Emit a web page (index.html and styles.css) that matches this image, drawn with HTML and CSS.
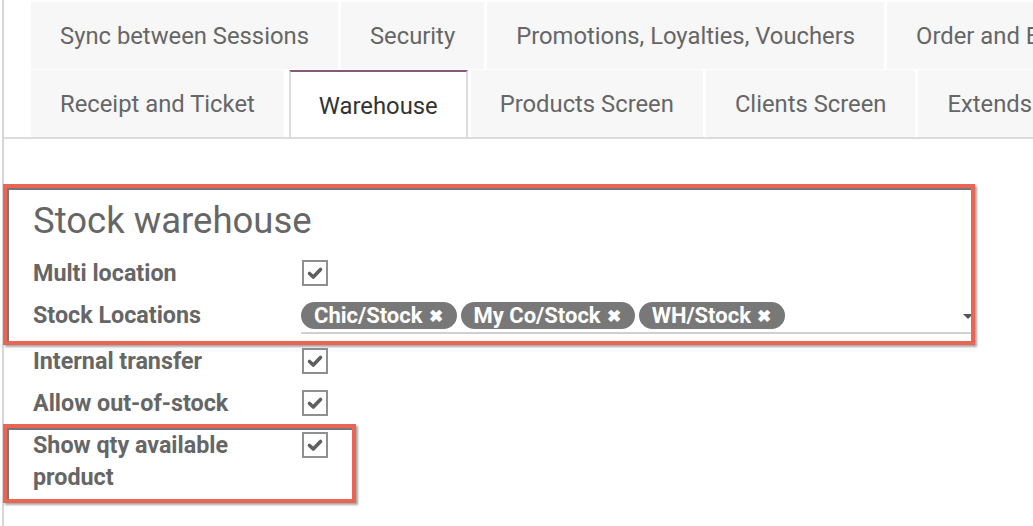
FILE: index.html
```html
<!DOCTYPE html>
<html>
<head>
<meta charset="utf-8">
<link rel="stylesheet" href="styles.css">
</head>
<body>
<div class="sheet">
  <div class="tabs">
    <div class="tab-row">
      <div class="tab">Sync between Sessions</div>
      <div class="tab">Security</div>
      <div class="tab">Promotions, Loyalties, Vouchers</div>
      <div class="tab">Order and Booking</div>
    </div>
    <div class="tab-row">
      <div class="tab">Receipt and Ticket</div>
      <div class="tab active">Warehouse</div>
      <div class="tab">Products Screen</div>
      <div class="tab">Clients Screen</div>
      <div class="tab">Extends</div>
    </div>
  </div>

  <div class="form">
    <h2 class="group-title">Stock warehouse</h2>
    <div class="row">
      <div class="label">Multi location</div>
      <div class="field"><span class="check"><svg viewBox="0 0 20 20" width="20" height="20"><path d="M4.5 10.5 L8.3 14 L15.5 6.5" fill="none" stroke="#5f5f5f" stroke-width="3.6" stroke-linecap="round" stroke-linejoin="round"/></svg></span></div>
    </div>
    <div class="row row-tags">
      <div class="label">Stock Locations</div>
      <div class="field many2many">
        <span class="tag">Chic/Stock <span class="x">✖</span></span>
        <span class="tag">My Co/Stock <span class="x">✖</span></span>
        <span class="tag">WH/Stock <span class="x">✖</span></span>
        <span class="caret"></span>
      </div>
    </div>
    <div class="row">
      <div class="label">Internal transfer</div>
      <div class="field"><span class="check"><svg viewBox="0 0 20 20" width="20" height="20"><path d="M4.5 10.5 L8.3 14 L15.5 6.5" fill="none" stroke="#5f5f5f" stroke-width="3.6" stroke-linecap="round" stroke-linejoin="round"/></svg></span></div>
    </div>
    <div class="row">
      <div class="label">Allow out-of-stock</div>
      <div class="field"><span class="check"><svg viewBox="0 0 20 20" width="20" height="20"><path d="M4.5 10.5 L8.3 14 L15.5 6.5" fill="none" stroke="#5f5f5f" stroke-width="3.6" stroke-linecap="round" stroke-linejoin="round"/></svg></span></div>
    </div>
    <div class="row">
      <div class="label wrap">Show qty available product</div>
      <div class="field"><span class="check"><svg viewBox="0 0 20 20" width="20" height="20"><path d="M4.5 10.5 L8.3 14 L15.5 6.5" fill="none" stroke="#5f5f5f" stroke-width="3.6" stroke-linecap="round" stroke-linejoin="round"/></svg></span></div>
    </div>
  </div>

  <div class="mark mark-1"></div>
  <div class="mark mark-2"></div>
</div>
</body>
</html>
```

FILE: styles.css
```css
html, body {
  margin: 0;
  padding: 0;
  background: #fff;
  overflow: hidden;
}
body {
  font-family: Roboto, "Liberation Sans", sans-serif;
  width: 1033px;
  height: 526px;
}
.sheet {
  position: relative;
  margin-left: 2px;
  border-left: 2px solid #d6d6d6;
  height: 526px;
}
.tabs {
  padding-top: 2px;
  border-bottom: 2px solid #dcdcdc;
  padding-left: 27px;
  overflow: hidden;
}
.tab-row {
  display: flex;
  gap: 3px;
  white-space: nowrap;
}
.tab-row + .tab-row {
  margin-top: 1px;
}
.tab {
  flex: none;
  height: 67px;
  line-height: 69px;
  padding: 0 29px;
  background: #f7f7f7;
  color: #666;
  font-size: 23.8px;
}
.tab.active {
  background: #fff;
  color: #333;
  border-top: 2px solid #875a7b;
  border-left: 2px solid #dcdcdc;
  border-right: 2px solid #dcdcdc;
  padding: 0 28px;
  height: 67px;
  line-height: 69px;
  margin-left: 2px;
  margin-bottom: -2px;
  position: relative;
}
.form {
  padding: 62px 0 0 29px;
  width: 940px;
}
.group-title {
  margin: 0 0 16px 0;
  font-weight: 400;
  font-size: 36.5px;
  line-height: 40px;
  color: #666;
}
.row {
  display: flex;
  align-items: flex-start;
  min-height: 42px;
}
.label {
  width: 268px;
  flex: none;
  font-weight: 700;
  font-size: 23.3px;
  line-height: 32px;
  color: #666;
}
.label.wrap {
  width: 230px;
  margin-right: 38px;
}
.field {
  flex: 1;
  padding-top: 3px;
}
.check {
  display: inline-flex;
  align-items: center;
  justify-content: center;
  width: 22px;
  height: 22px;
  border: 2px solid #8f8f8f;
  margin-left: 1px;
}
.row-tags {
  min-height: 46px;
}
.many2many {
  display: flex;
  align-items: center;
  gap: 4px;
  border-bottom: 2px solid #d0d0d0;
  height: 27px;
  padding-top: 3px;
  padding-bottom: 3px;
  position: relative;
}
.tag {
  display: inline-flex;
  align-items: center;
  height: 27px;
  padding: 0 14px 0 13px;
  border-radius: 14px;
  background: #787878;
  color: #fff;
  font-weight: 700;
  font-size: 22px;
  white-space: nowrap;
}
.tag .x {
  font-size: 17px;
  margin-left: 6px;
}
.caret {
  position: absolute;
  right: 0;
  top: 15px;
  width: 0;
  height: 0;
  border-left: 5px solid transparent;
  border-right: 5px solid transparent;
  border-top: 5px solid #555;
}
.mark {
  position: absolute;
  border: 4px solid #ea6553;
  box-shadow: inset 2px 2px 0 #777, 2px 2px 2px rgba(0,0,0,0.35);
  pointer-events: none;
}
.mark-1 {
  left: -1px;
  top: 184px;
  width: 964px;
  height: 153px;
}
.mark-2 {
  left: -1px;
  top: 424px;
  width: 345px;
  height: 71px;
}
```
